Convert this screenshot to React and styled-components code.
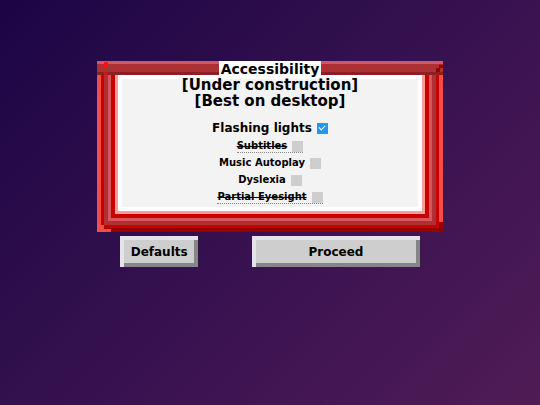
import React, { useState } from 'react';
import styled, { createGlobalStyle } from 'styled-components';

const colors = {
  red: '#c80000',
  darkRed: '#980000',
  brightRed: '#f64a4e',
  brick: '#ad3034',
  rose: '#d4565e',
  pink: '#ff9a9a',
  panel: '#f3f3f3',
  grey: '#cecece',
};

const GlobalStyle = createGlobalStyle`
  * {
    box-sizing: border-box;
  }

  body {
    margin: 0;
    font-family: 'DejaVu Sans', sans-serif;
    font-weight: bold;
    color: #000;
  }
`;

const Page = styled.main`
  min-height: 100vh;
  padding-top: 61px;
  display: flex;
  flex-direction: column;
  align-items: center;
  background: linear-gradient(135deg, #1c0545 0%, #36114f 50%, #501c56 100%);
`;

const Menu = styled.form`
  width: 64%;
  display: flex;
  flex-direction: column;
  gap: 4px;
`;

const Frame = styled.div`
  position: relative;
`;

const TitleBar = styled.div`
  display: flex;
  justify-content: center;
  height: 14px;
  background: linear-gradient(
    ${colors.rose} 0 3px,
    ${colors.brick} 3px 11px,
    #8a2022 11px
  );
`;

const Title = styled.h1`
  margin: 0;
  padding: 0 2px;
  background-color: #fff;
  font-size: 14px;
  line-height: 16px;
`;

const Ring = styled.div`
  border: solid ${props => props.color};
  border-width: 0 ${props => props.size}px ${props => props.size}px;
  border-bottom-color: ${props => props.$bottom || props.color};
`;

const Panel = styled.div`
  padding: 2px 4px 4px;
  background-color: ${colors.panel};
  box-shadow: inset 0 0 0 4px #fff;
  text-align: center;
`;

const Note = styled.p`
  margin: 0;
  font-size: 15px;
  line-height: 16px;
`;

const Options = styled.div`
  display: flex;
  flex-direction: column;
  align-items: center;
  gap: 4px;
  padding: 12px 0 3px;
`;

const Option = styled.label`
  display: flex;
  align-items: center;
  gap: 5px;
  font-size: ${props => (props.$large ? 12 : 10)}px;
  line-height: ${props => (props.$large ? 14 : 12)}px;
  border-bottom: 1px ${props => (props.$disabled ? 'dotted #888' : 'solid transparent')};
`;

const OptionName = styled.span`
  text-decoration: ${props => (props.$disabled ? 'line-through' : 'none')};
`;

const Checkbox = styled.input`
  appearance: none;
  display: grid;
  place-items: center;
  width: 11px;
  height: 11px;
  margin: 0;
  background-color: ${colors.grey};

  &:checked {
    background-color: #2196f3;
  }

  &:checked::after {
    content: '';
    width: 3px;
    height: 5px;
    margin-bottom: 2px;
    border: solid #fff;
    border-width: 0 1px 1px 0;
    transform: rotate(45deg);
  }
`;

const Corner = styled.svg`
  position: absolute;
  ${props => props.$side}: 0;
  ${props => props.$edge}: 0;
  shape-rendering: crispEdges;
`;

const Actions = styled.div`
  display: grid;
  grid-template-columns: 26% 56%;
  justify-content: space-between;
  padding: 0 23px;
`;

const Button = styled.button`
  border: 0;
  padding: 8px 4px 7px;
  background-color: ${colors.grey};
  box-shadow:
    inset 4px 0 #e4e4e6,
    inset 0 4px #e4e4e6,
    inset -4px -4px #868686;
  color: #000;
  font: bold 12px/16px 'DejaVu Sans', sans-serif;
  cursor: pointer;
`;

const defaults = {
  flashing: true,
  subtitles: false,
  autoplay: false,
  dyslexia: false,
  eyesight: false,
};

const options = [
  { id: 'flashing', label: 'Flashing lights', large: true },
  { id: 'subtitles', label: 'Subtitles', disabled: true },
  { id: 'autoplay', label: 'Music Autoplay' },
  { id: 'dyslexia', label: 'Dyslexia' },
  { id: 'eyesight', label: 'Partial Eyesight', disabled: true },
];

const FrameCorners = () => (
  <>
    <Corner $side="left" $edge="top" width="14" height="14" aria-hidden="true">
      <path fill="#ff1014" d="M7 1h4v6h-4z" />
      <path fill="#c8181c" d="M7 11h4v3h-4z" />
    </Corner>
    <Corner $side="right" $edge="top" width="14" height="14" aria-hidden="true">
      <path fill={colors.darkRed} d="M10 4h4v3h-3v4h-4v-4h3z" />
    </Corner>
    <Corner $side="left" $edge="bottom" width="14" height="14" aria-hidden="true">
      <path fill={colors.brightRed} d="M0 0h4v7h3v4h7v3h-14z" />
    </Corner>
    <Corner $side="right" $edge="bottom" width="14" height="14" aria-hidden="true">
      <path fill={colors.darkRed} d="M10 4h4v10h-7v-4h3z" />
    </Corner>
  </>
);

const App = () => {
  const [settings, setSettings] = useState(defaults);

  const toggle = (id) => {
    setSettings({ ...settings, [id]: !settings[id] });
  };

  return (
    <>
      <GlobalStyle />
      <Page>
        <Menu onSubmit={e => e.preventDefault()}>
          <Frame>
            <TitleBar>
              <Title>Accessibility</Title>
            </TitleBar>
            <Ring size={4} color={colors.brightRed} $bottom={colors.darkRed}>
              <Ring size={3} color={colors.red}>
                <Ring size={4} color={colors.brick}>
                  <Ring size={3} color={colors.rose}>
                    <Ring size={4} color={colors.red}>
                      <Ring size={3} color={colors.pink}>
                        <Panel>
                          <Note>
                            [Under construction]
                            <br />
                            [Best on desktop]
                          </Note>
                          <Options>
                            {options.map(option => (
                              <Option
                                key={option.id}
                                htmlFor={option.id}
                                $large={option.large}
                                $disabled={option.disabled}
                              >
                                <OptionName $disabled={option.disabled}>{option.label}</OptionName>
                                <Checkbox
                                  type="checkbox"
                                  id={option.id}
                                  checked={settings[option.id]}
                                  disabled={option.disabled}
                                  onChange={() => toggle(option.id)}
                                />
                              </Option>
                            ))}
                          </Options>
                        </Panel>
                      </Ring>
                    </Ring>
                  </Ring>
                </Ring>
              </Ring>
            </Ring>
            <FrameCorners />
          </Frame>
          <Actions>
            <Button type="button" onClick={() => setSettings(defaults)}>Defaults</Button>
            <Button type="submit">Proceed</Button>
          </Actions>
        </Menu>
      </Page>
    </>
  );
};

export default App;
